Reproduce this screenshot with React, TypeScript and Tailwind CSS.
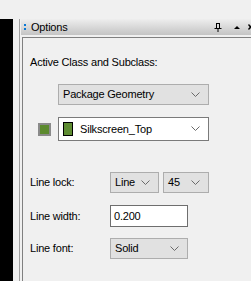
import React from "react";

function Chevron() {
  return (
    <svg width="9" height="6" viewBox="0 0 9 6" className="shrink-0">
      <path d="M0.5 0.5 L4.5 4.5 L8.5 0.5" fill="none" stroke="#6a6a6a" strokeWidth="1" />
    </svg>
  );
}

function Select({ label, w, h, white, children }: { label?: string; w: string; h: string; white?: boolean; children?: React.ReactNode }) {
  return (
    <div
      className={`${w} ${h} flex items-center border ${white ? "bg-white border-[#7a7a7a]" : "bg-[#e1e1e1] border-[#adadad]"} pl-[4px] pr-[8px]`}
    >
      {children}
      <span className="flex-1 text-black">{label}</span>
      <Chevron />
    </div>
  );
}

export default function App() {
  return (
    <div
      className="w-[251px] h-[281px] bg-[#f0f0f0] overflow-hidden flex flex-col text-[11px] leading-[13px] tracking-[-0.2px] text-black"
      style={{ fontFamily: '"Liberation Sans", Arial, sans-serif' }}
    >
      <div className="h-[19px] shrink-0" />
      <div className="flex flex-1 min-h-0">
        <div className="w-[13px] bg-black shrink-0" />
        <div className="w-[6px] shrink-0" />
        <div className="w-px bg-[#a0a0a0] shrink-0" />
        <div className="flex-1 flex flex-col min-w-0">
          <div className="h-[16px] ml-px flex items-center bg-gradient-to-b from-[#eeeeee] to-[#c4c4c4] relative">
            <div className="ml-[3px] flex flex-col gap-[2px]">
              <div className="w-[2px] h-[2px] bg-[#0a78d4]" />
              <div className="w-[2px] h-[2px] bg-[#0a78d4]" />
            </div>
            <span className="ml-[5px] text-[#000]">Options</span>
            <div className="flex-1" />
            <svg width="8" height="9" viewBox="0 0 8 9" className="mr-[12px]">
              <path d="M2 0.5 H6 M2.5 0.5 V5 M5.5 0.5 V5 M0.5 5.5 H7.5 M4 5.5 V9" stroke="#000" strokeWidth="1" fill="none" />
            </svg>
            <svg width="6" height="4" viewBox="0 0 6 4" className="mr-[8px]">
              <path d="M0 4 L3 1 L6 4 Z" fill="#000" />
            </svg>
            <svg width="5" height="6" viewBox="0 0 5 6" className="mr-[-2px]">
              <path d="M0.5 0.5 L4.5 5.5 M4.5 0.5 L0.5 5.5" stroke="#000" strokeWidth="1.3" fill="none" />
            </svg>
          </div>
          <div className="ml-[2px] mt-[2px] flex-1 border-l border-t border-[#808080] flex flex-col">
            <div className="ml-[7px] mt-[18px]">Active Class and Subclass:</div>
            <div className="ml-[35px] mt-[15px]">
              <Select label="Package Geometry" w="w-[151px]" h="h-[21px]" />
            </div>
            <div className="flex items-center mt-[12px]">
              <div className="ml-[15px] w-[13px] h-[13px] border-2 border-[#8a8a8a] bg-[#5c8a2e]" />
              <div className="ml-[7px]">
                <Select w="w-[151px]" h="h-[24px]" white>
                  <div className="w-[10px] h-[14px] border border-black bg-[#5e8c32] mr-[7px]" />
                  <span>Silkscreen_Top</span>
                  <span className="flex-1" />
                </Select>
              </div>
            </div>
            <div className="flex items-center mt-[31px]">
              <div className="ml-[7px] w-[80px]">Line lock:</div>
              <Select label="Line" w="w-[49px]" h="h-[21px]" />
              <div className="w-[4px]" />
              <Select label="45" w="w-[46px]" h="h-[21px]" />
            </div>
            <div className="flex items-center mt-[12px]">
              <div className="ml-[7px] w-[80px]">Line width:</div>
              <div className="w-[78px] h-[22px] bg-white border border-[#6e6e6e] flex items-center pl-[3px]">0.200</div>
            </div>
            <div className="flex items-center mt-[11px]">
              <div className="ml-[7px] w-[80px]">Line font:</div>
              <Select label="Solid" w="w-[78px]" h="h-[21px]" />
            </div>
          </div>
        </div>
      </div>
    </div>
  );
}
